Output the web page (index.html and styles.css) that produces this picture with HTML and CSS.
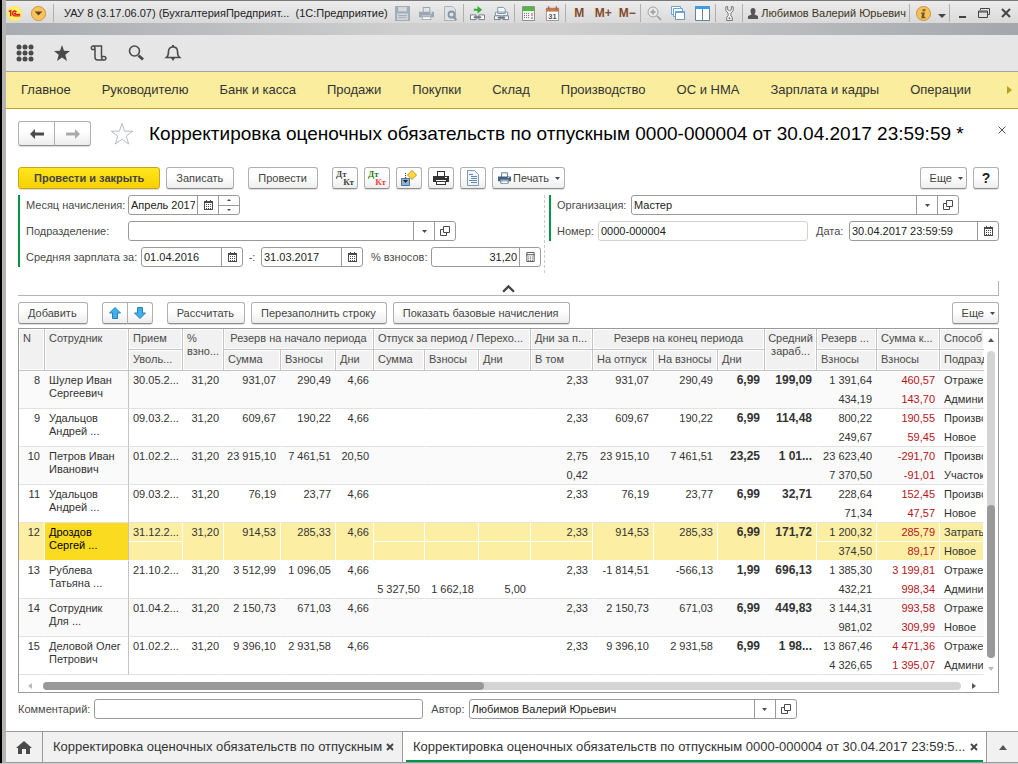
FILE: index.html
```html
<!DOCTYPE html>
<html lang="ru">
<head>
<meta charset="utf-8">
<title>Корректировка оценочных обязательств по отпускным</title>
<link rel="stylesheet" href="styles.css">
</head>
<body>
<svg class="defs" aria-hidden="true">
  <symbol id="i-cal" viewBox="0 0 9 10"><path d="M0 1h9v9H0z" fill="#4a4a4a"/><path d="M2 0h1v2H2zM6 0h1v2H6z" fill="#4a4a4a"/><path d="M1 3h7v6H1z" fill="#fff"/><path d="M2 4h1v1H2zM4 4h1v1H4zM6 4h1v1H6zM2 6h1v1H2zM4 6h1v1H4zM6 6h1v1H6zM2 8h1v1H2zM4 8h1v1H4zM6 8h1v1H6z" fill="#4a4a4a"/></symbol>
  <symbol id="i-caret" viewBox="0 0 5 3"><path d="M0 0h5L2.500 3z" fill="#4a4a4a"/></symbol>
  <symbol id="i-open" viewBox="0 0 10 10"><path d="M3.500.5h6v6h-6zM3 3.500H.5v6h6V7" fill="none" stroke="#4a4a4a"/></symbol>
  <symbol id="i-print" viewBox="0 0 16 14"><path d="M4 0h8v5h-1V1H5v4H4zM0 5h16v6h-3V9H3v2H0zM3 10h10v4H3z"/><path d="M4 11h8v2H4z" fill="#fff"/><path d="M12 6h2v1h-2z" fill="#fff"/></symbol>
  <symbol id="i-x" viewBox="0 0 8 8"><path d="M1 1l6 6M7 1L1 7" fill="none" stroke="#444" stroke-width="1.800"/></symbol>
</svg>
<div class="window">
  <header class="titlebar">
    <svg class="logo" viewBox="0 0 18 18"><circle cx="9" cy="9" r="8" fill="#ffe94a"/><circle cx="9" cy="9" r="7" fill="#fff26b"/><path d="M3 7l2-1v6M11 7.500c-1-2-4-1.500-4 1.300s2 2.700 3 2.700h5M10.500 9c-1.500-.8-2 .7-.5.900h5" fill="none" stroke="#e01b1b" stroke-width="1.500"/></svg>
    <button class="menu-ball" aria-label="Главное меню"><svg viewBox="0 0 18 18"><circle cx="9" cy="9" r="7.500" fill="#f8c35c" stroke="#c99537"/><path d="M5 7h8l-4 4z" fill="#5c4425"/></svg></button>
    <i class="sep"></i>
    <span class="app-title">УАУ 8 (3.17.06.07) (БухгалтерияПредприят...&nbsp; (1С:Предприятие)</span>
    <button class="tb" aria-label="Сохранить"><svg viewBox="0 0 14 14"><path d="M0 0h14v14H0z" fill="#a2adb8"/><path d="M3 1h8v4H3z" fill="#d5dade"/><path d="M2 7h10v6H2z" fill="#d5dade"/><path d="M3 9h8M3 11h8" stroke="#a2adb8"/></svg></button>
    <button class="tb" aria-label="Печать"><svg viewBox="0 0 16 14" fill="#9aa7b3"><use href="#i-print"/></svg></button>
    <button class="tb" aria-label="Предварительный просмотр"><svg viewBox="0 0 14 15"><path d="M1 .5h8l3 3v11H1z" fill="#dfe3e6" stroke="#a9b3bc"/><circle cx="8" cy="8.500" r="3" fill="none" stroke="#8795a3" stroke-width="1.800"/><path d="M10 11l3 3" stroke="#8795a3" stroke-width="2"/></svg></button>
    <i class="sep"></i>
    <button class="tb" aria-label="Получить ссылку"><svg viewBox="0 0 16 16"><path d="M4 3h4V0l5 4-5 4V5H4z" fill="#2fae2f"/><path d="M.5 9.500h6v5h-6zM9.500 9.500h6v5h-6z" fill="#fff" stroke="#6c7783"/><path d="M4 12h8" stroke="#6c7783" stroke-width="2"/></svg></button>
    <button class="tb" aria-label="Перейти по ссылке"><svg viewBox="0 0 16 16"><path d="M4 1.500h6l2 2V8H4zM1.500 6.500h13v4h-13z" fill="#f4f7fa" stroke="#7f93a8"/><path d="M.5 10.500h6v4h-6zM9.500 10.500h6v4h-6z" fill="#fff" stroke="#6c7783"/><path d="M4 12.500h8" stroke="#6c7783" stroke-width="2"/></svg></button>
    <i class="sep"></i>
    <button class="tb" aria-label="Калькулятор"><svg viewBox="0 0 13 15"><path d="M.5.5h12v14H.5z" fill="#f3f3f3" stroke="#8b9486"/><path d="M1 1h11v4H1z" fill="#4fb843"/><path d="M2 7.500h6M2 9.500h6M2 11.500h6" stroke="#6b7a70" stroke-dasharray="1 1"/><path d="M10 7v3" stroke="#d44"/><path d="M10 11v2" stroke="#666"/></svg></button>
    <button class="tb" aria-label="Календарь"><svg viewBox="0 0 14 16"><path d="M.5 2.500h13v13H.5z" fill="#fff" stroke="#9b938b"/><path d="M0 2h14v4H0z" fill="#c47a50"/><path d="M3 0v4M11 0v4" stroke="#8a5a40"/><text x="7" y="14" class="cal-day">31</text></svg></button>
    <i class="sep"></i>
    <button class="tb mem">M</button><button class="tb mem">M+</button><button class="tb mem">M−</button>
    <i class="sep"></i>
    <button class="tb" aria-label="Масштаб"><svg viewBox="0 0 15 15"><circle cx="6" cy="6" r="5" fill="#e9e9e9" stroke="#a5a5a5"/><path d="M3.500 6h5M6 3.500v5M10 10l4 4" stroke="#999" stroke-width="1.500"/></svg></button>
    <button class="tb" aria-label="Окна"><svg viewBox="0 0 15 15"><path d="M.5.5h9v8h-9z" fill="#fff" stroke="#6fa3d0"/><path d="M2.500 2.500h9v8h-9z" fill="#fff" stroke="#6fa3d0"/><path d="M4.500 5.500h9v8h-9z" fill="#fff" stroke="#6f93b5"/><path d="M4 5h10v2H4z" fill="#63a7de"/></svg></button>
    <button class="tb" aria-label="Разделить"><svg viewBox="0 0 15 15"><path d="M.5.5h14v14H.5zM7.500 3v12" fill="#fff" stroke="#64829c"/><path d="M0 0h15v3H0z" fill="#3f9be4"/></svg></button>
    <i class="sep"></i>
    <button class="tb" aria-label="Сервис"><svg viewBox="0 0 10 16"><path d="M1 1v4l2.500 2.500v3L2 12v3.500h6V12l-1.500-1.500v-3L9 5V1L7 .5V4L5 5 3 4V.5z" fill="#f1f1f1" stroke="#707070"/><circle cx="5" cy="13" r="1" fill="#707070"/></svg></button>
    <i class="sep"></i>
    <span class="user"><svg viewBox="0 0 10 11"><path d="M2.500 3a2.500 3 0 0 1 5 0c0 2-1 2.500-1 3.500L10 8v3H0V8l3.500-1.500c0-1-1-1.500-1-3.500z" fill="#555"/></svg>Любимов Валерий Юрьевич</span>
    <i class="sep"></i>
    <button class="tb" aria-label="О программе"><svg viewBox="0 0 16 16"><circle cx="8" cy="8" r="7.500" fill="#f7c159" stroke="#c6903a"/><path d="M7 3.500h3v2H7zM5.500 7H9.500l-1 4.500h1.500V13H5.500l1-4.500h-1z" fill="#6c5734"/></svg></button>
    <button class="tb more" aria-label="Ещё"><svg viewBox="0 0 8 6"><path d="M0 1h8L4 5z" fill="#444"/></svg></button>
    <i class="sep"></i>
    <button class="tb win" aria-label="Свернуть"><svg viewBox="0 0 12 10"><path d="M3 8h7v2H3z" fill="#444"/></svg></button>
    <button class="tb win" aria-label="Восстановить"><svg viewBox="0 0 12 10"><path d="M2.500 2V.5h9v6H9.500M.5 3h9v6.500h-9zM.5 4h9" fill="none" stroke="#444"/></svg></button>
    <button class="tb win" aria-label="Закрыть"><svg viewBox="0 0 12 10"><path d="M2 1l8 8M10 1L2 9" stroke="#444" stroke-width="2"/></svg></button>
  </header>
  <div class="band"></div>
  <div class="tools">
    <button aria-label="Меню функций"><svg viewBox="0 0 18 18" fill="#4a4a4a"><circle cx="3" cy="3" r="2.500"/><circle cx="9" cy="3" r="2.500"/><circle cx="15" cy="3" r="2.500"/><circle cx="3" cy="9" r="2.500"/><circle cx="9" cy="9" r="2.500"/><circle cx="15" cy="9" r="2.500"/><circle cx="3" cy="15" r="2.500"/><circle cx="9" cy="15" r="2.500"/><circle cx="15" cy="15" r="2.500"/></svg></button>
    <button aria-label="Избранное"><svg viewBox="0 0 18 18"><path d="M9 1l2 5.800 6 .2-4.700 3.700L14 17l-5-3.600L4 17l1.700-6.300L1 7l6-.2z" fill="#4a4a4a"/></svg></button>
    <button aria-label="История"><svg viewBox="0 0 18 18"><path d="M4.500 5.500H2c-1.500-1.500-.5-3.500 1-3.500h8.500v11M3 2c2 0 2 1.500 2 3v8c0 2 .5 3 2.500 3h7M11.500 12.500H14c2.500 0 2.500 3.500 0 3.500-1.500 0-2.500-1-2.500-3.500" fill="none" stroke="#4a4a4a" stroke-width="1.500"/></svg></button>
    <button aria-label="Поиск"><svg viewBox="0 0 18 18"><circle cx="7.500" cy="7" r="5" fill="none" stroke="#4a4a4a" stroke-width="1.600"/><path d="M11.500 11.500l4.500 4" stroke="#4a4a4a" stroke-width="3"/></svg></button>
    <button aria-label="Оповещения"><svg viewBox="0 0 18 18"><path d="M2.500 13.500c2-1.500 2-3 2-6 0-3 2-4.500 4.500-4.500s4.500 1.500 4.500 4.500c0 3 0 4.500 2 6z" fill="none" stroke="#4a4a4a" stroke-width="1.600"/><path d="M8 1h2v2H8zM7 14h4l-2 3z" fill="#4a4a4a"/></svg></button>
  </div>
  <nav class="sections">
    <a href="#">Главное</a><a href="#">Руководителю</a><a href="#">Банк и касса</a><a href="#">Продажи</a><a href="#">Покупки</a><a href="#">Склад</a><a href="#">Производство</a><a href="#">ОС и НМА</a><a href="#">Зарплата и кадры</a><a href="#">Операции</a>
    <button aria-label="Дальше"><svg viewBox="0 0 5 8"><path d="M0 0l5 4-5 4z" fill="#c09a1c"/></svg></button>
  </nav>

  <main class="doc">
    <div class="doc-head">
      <div class="pair history">
        <button class="btn" aria-label="Назад"><svg viewBox="0 0 14 10"><path d="M0 5l5-5v3.500h9v3H5V10z" fill="#4a4a4a"/></svg></button>
        <button class="btn" aria-label="Вперед"><svg viewBox="0 0 14 10"><path d="M14 5L9 0v3.500H0v3h9V10z" fill="#aaa"/></svg></button>
      </div>
      <button class="fav" aria-label="В избранное"><svg viewBox="0 0 24 24"><path d="M12 1.500l2.600 7.700h8.200l-6.600 4.800 2.500 8L12 17.200 5.300 22l2.500-8L1.200 9.200h8.200z" fill="#fff" stroke="#b4bac4"/></svg></button>
      <h1>Корректировка оценочных обязательств по отпускным 0000-000004 от 30.04.2017 23:59:59 *</h1>
      <button class="close" aria-label="Закрыть"><svg viewBox="0 0 8 8"><path d="M.5.5l7 7M7.500.5l-7 7" stroke="#555"/></svg></button>
    </div>

    <div class="commands">
      <button class="btn primary">Провести и закрыть</button>
      <button class="btn">Записать</button>
      <button class="btn gap">Провести</button>
      <button class="btn icon gap dtkt"><span>Дт</span><span>Кт</span></button>
      <button class="btn icon dtkt color"><span>Дт</span><span>Кт</span></button>
      <button class="btn icon" aria-label="Создать на основании"><svg viewBox="0 0 16 16"><path d="M11 .5l4.500 4.500-4.500 4.500L6.500 5z" fill="#ffd83b" stroke="#b8952a"/><path d="M.5 8.500h8v7h-8z" fill="#8fb4d3" stroke="#4f7596"/><path d="M4.500 3v6" stroke="#333" stroke-dasharray="1 1"/><path d="M2 10h5l-2.500 3z" fill="#222"/></svg></button>
      <button class="btn icon" aria-label="Печать документа"><svg viewBox="0 0 16 14" fill="#333"><use href="#i-print"/></svg></button>
      <button class="btn icon" aria-label="Отчет"><svg viewBox="0 0 14 16"><path d="M1.500.5h7l4 4v11h-11z" fill="#eef4f9" stroke="#7f9cb5"/><path d="M3 4.500h4M5 6.500h6M5 8.500h6M3 10.500h8M5 12.500h6" stroke="#6688a5"/></svg></button>
      <button class="btn print"><svg viewBox="0 0 16 14" fill="#41627f"><use href="#i-print"/></svg>Печать<svg class="caret"><use href="#i-caret"/></svg></button>
      <button class="btn right more-btn">Еще<svg class="caret"><use href="#i-caret"/></svg></button>
      <button class="btn icon help">?</button>
    </div>

    <form class="form">
      <div class="col left">
        <div class="group">
          <div class="line">
            <label class="w102" for="month">Месяц начисления:</label>
            <div class="field month"><input id="month" value="Апрель 2017"><button type="button" aria-label="Выбрать месяц"><svg class="cal"><use href="#i-cal"/></svg></button><div class="spin"><button type="button" aria-label="Больше"><svg viewBox="0 0 4 2"><path d="M0 2l2-2 2 2z" fill="#444"/></svg></button><button type="button" aria-label="Меньше"><svg viewBox="0 0 4 2"><path d="M0 0h4L2 2z" fill="#444"/></svg></button></div></div>
          </div>
          <div class="line">
            <label class="w102" for="dept">Подразделение:</label>
            <div class="field combo"><input id="dept"><button type="button" aria-label="Список"><svg class="caret"><use href="#i-caret"/></svg></button><button type="button" aria-label="Открыть"><svg class="open"><use href="#i-open"/></svg></button></div>
          </div>
          <div class="line">
            <label class="w115" for="from">Средняя зарплата за:</label>
            <div class="field date"><input id="from" value="01.04.2016"><button type="button" aria-label="Календарь"><svg class="cal"><use href="#i-cal"/></svg></button></div>
            <label class="dash" for="to">-:</label>
            <div class="field date"><input id="to" value="31.03.2017"><button type="button" aria-label="Календарь"><svg class="cal"><use href="#i-cal"/></svg></button></div>
            <label class="pct" for="pct">% взносов:</label>
            <div class="field num"><input id="pct" value="31,20"><button type="button" aria-label="Калькулятор"><svg class="cal" viewBox="0 0 9 11"><path d="M.5.5h8v10h-8zM0 3h9" fill="none" stroke="#4a4a4a"/><path d="M2 5.500h6M2 7.500h6M2 9.500h6" stroke="#4a4a4a" stroke-dasharray="1 1"/></svg></button></div>
          </div>
        </div>
      </div>
      <div class="col">
        <div class="group">
          <div class="line">
            <label class="org-label" for="org">Организация:</label>
            <div class="field combo"><input id="org" value="Мастер"><button type="button" aria-label="Список"><svg class="caret"><use href="#i-caret"/></svg></button><button type="button" aria-label="Открыть"><svg class="open"><use href="#i-open"/></svg></button></div>
          </div>
          <div class="line">
            <label class="num-label" for="no">Номер:</label>
            <div class="field soft"><input id="no" value="0000-000004"></div>
            <label class="date-label" for="date">Дата:</label>
            <div class="field datetime"><input id="date" value="30.04.2017 23:59:59"><button type="button" aria-label="Календарь"><svg class="cal"><use href="#i-cal"/></svg></button></div>
          </div>
        </div>
      </div>
    </form>

    <div class="splitter"><button aria-label="Свернуть группу"><svg viewBox="0 0 12 8"><path d="M1 7l5-5 5 5" fill="none" stroke="#444" stroke-width="2.200"/></svg></button></div>

    <div class="commands second">
      <button class="btn">Добавить</button>
      <div class="pair gap arrows">
        <button class="btn" aria-label="Вверх"><svg viewBox="0 0 12 12"><path d="M6 .5l5.500 5.500H8.500v5.500h-5V6H.5z" fill="#3fb0ee" stroke="#2a7fb5"/></svg></button>
        <button class="btn" aria-label="Вниз"><svg viewBox="0 0 12 12"><path d="M6 11.500L.5 6h3V.5h5V6h3z" fill="#3fb0ee" stroke="#2a7fb5"/></svg></button>
      </div>
      <button class="btn gap">Рассчитать</button>
      <button class="btn">Перезаполнить строку</button>
      <button class="btn">Показать базовые начисления</button>
      <button class="btn right more-btn">Еще<svg class="caret"><use href="#i-caret"/></svg></button>
    </div>

    <div class="grid">
      <div class="grid-main">
        <div class="grid-view">
          <table>
            <colgroup><col class="c26"><col class="c84"><col class="c54"><col class="c41"><col class="c57"><col class="c55"><col class="c38"><col class="c51"><col class="c54"><col class="c52"><col class="c62"><col class="c61"><col class="c64"><col class="c47"><col class="c52"><col class="c60"><col class="c63"><col></colgroup>
            <thead>
              <tr><th rowspan="2">N</th><th rowspan="2">Сотрудник</th><th>Прием</th><th rowspan="2">%<br>взно...</th><th colspan="3" class="c">Резерв на начало периода</th><th colspan="3">Отпуск за период / Перехо...</th><th>Дни за п...</th><th colspan="3" class="c">Резерв на конец периода</th><th rowspan="2" class="c">Средний<br>зараб...</th><th>Резерв ...</th><th>Сумма к...</th><th class="cut">Способ отражения</th></tr>
              <tr><th>Уволь...</th><th>Сумма</th><th>Взносы</th><th>Дни</th><th>Сумма</th><th>Взносы</th><th>Дни</th><th>В том</th><th>На отпуск</th><th>На взносы</th><th>Дни</th><th>Взносы</th><th>Взносы</th><th class="cut">Подразделение</th></tr>
            </thead>
            <tbody>
              <tr><td rowspan="2">8</td><td rowspan="2" class="name">Шулер Иван Сергеевич</td><td class="l">30.05.2...</td><td rowspan="2">31,20</td><td rowspan="2">931,07</td><td rowspan="2">290,49</td><td rowspan="2">4,66</td><td></td><td></td><td></td><td>2,33</td><td rowspan="2">931,07</td><td rowspan="2">290,49</td><td rowspan="2" class="b">6,99</td><td rowspan="2" class="b">199,09</td><td>1 391,64</td><td class="r">460,57</td><td class="l">Отражение</td></tr>
              <tr><td></td><td></td><td></td><td></td><td></td><td>434,19</td><td class="r">143,70</td><td class="l">Администрация</td></tr>
            </tbody>
            <tbody>
              <tr><td rowspan="2">9</td><td rowspan="2" class="name">Удальцов Андрей ...</td><td class="l">09.03.2...</td><td rowspan="2">31,20</td><td rowspan="2">609,67</td><td rowspan="2">190,22</td><td rowspan="2">4,66</td><td></td><td></td><td></td><td>2,33</td><td rowspan="2">609,67</td><td rowspan="2">190,22</td><td rowspan="2" class="b">6,99</td><td rowspan="2" class="b">114,48</td><td>800,22</td><td class="r">190,55</td><td class="l">Производство</td></tr>
              <tr><td></td><td></td><td></td><td></td><td></td><td>249,67</td><td class="r">59,45</td><td class="l">Новое</td></tr>
            </tbody>
            <tbody>
              <tr><td rowspan="2">10</td><td rowspan="2" class="name">Петров Иван Иванович</td><td class="l">01.02.2...</td><td rowspan="2">31,20</td><td rowspan="2">23 915,10</td><td rowspan="2">7 461,51</td><td rowspan="2">20,50</td><td></td><td></td><td></td><td>2,75</td><td rowspan="2">23 915,10</td><td rowspan="2">7 461,51</td><td rowspan="2" class="b">23,25</td><td rowspan="2" class="b">1 01...</td><td>23 623,40</td><td class="r">-291,70</td><td class="l">Производство</td></tr>
              <tr><td></td><td></td><td></td><td></td><td>0,42</td><td>7 370,50</td><td class="r">-91,01</td><td class="l">Участок</td></tr>
            </tbody>
            <tbody>
              <tr><td rowspan="2">11</td><td rowspan="2" class="name">Удальцов Андрей ...</td><td class="l">09.03.2...</td><td rowspan="2">31,20</td><td rowspan="2">76,19</td><td rowspan="2">23,77</td><td rowspan="2">4,66</td><td></td><td></td><td></td><td>2,33</td><td rowspan="2">76,19</td><td rowspan="2">23,77</td><td rowspan="2" class="b">6,99</td><td rowspan="2" class="b">32,71</td><td>228,64</td><td class="r">152,45</td><td class="l">Производство</td></tr>
              <tr><td></td><td></td><td></td><td></td><td></td><td>71,34</td><td class="r">47,57</td><td class="l">Новое</td></tr>
            </tbody>
            <tbody class="selected">
              <tr><td rowspan="2">12</td><td rowspan="2" class="name">Дроздов Сергей ...</td><td class="l">31.12.2...</td><td rowspan="2">31,20</td><td rowspan="2">914,53</td><td rowspan="2">285,33</td><td rowspan="2">4,66</td><td></td><td></td><td></td><td>2,33</td><td rowspan="2">914,53</td><td rowspan="2">285,33</td><td rowspan="2" class="b">6,99</td><td rowspan="2" class="b">171,72</td><td>1 200,32</td><td class="r">285,79</td><td class="l">Затраты</td></tr>
              <tr><td></td><td></td><td></td><td></td><td></td><td>374,50</td><td class="r">89,17</td><td class="l">Новое</td></tr>
            </tbody>
            <tbody>
              <tr><td rowspan="2">13</td><td rowspan="2" class="name">Рублева Татьяна ...</td><td class="l">21.10.2...</td><td rowspan="2">31,20</td><td rowspan="2">3 512,99</td><td rowspan="2">1 096,05</td><td rowspan="2">4,66</td><td></td><td></td><td></td><td>2,33</td><td rowspan="2">-1 814,51</td><td rowspan="2">-566,13</td><td rowspan="2" class="b">1,99</td><td rowspan="2" class="b">696,13</td><td>1 385,30</td><td class="r">3 199,81</td><td class="l">Отражение</td></tr>
              <tr><td></td><td>5 327,50</td><td>1 662,18</td><td>5,00</td><td></td><td>432,21</td><td class="r">998,34</td><td class="l">Администрация</td></tr>
            </tbody>
            <tbody>
              <tr><td rowspan="2">14</td><td rowspan="2" class="name">Сотрудник<br>Для ...</td><td class="l">01.04.2...</td><td rowspan="2">31,20</td><td rowspan="2">2 150,73</td><td rowspan="2">671,03</td><td rowspan="2">4,66</td><td></td><td></td><td></td><td>2,33</td><td rowspan="2">2 150,73</td><td rowspan="2">671,03</td><td rowspan="2" class="b">6,99</td><td rowspan="2" class="b">449,83</td><td>3 144,31</td><td class="r">993,58</td><td class="l">Отражение</td></tr>
              <tr><td></td><td></td><td></td><td></td><td></td><td>981,02</td><td class="r">309,99</td><td class="l">Новое</td></tr>
            </tbody>
            <tbody>
              <tr><td rowspan="2">15</td><td rowspan="2" class="name">Деловой Олег Петрович</td><td class="l">01.02.2...</td><td rowspan="2">31,20</td><td rowspan="2">9 396,10</td><td rowspan="2">2 931,58</td><td rowspan="2">4,66</td><td></td><td></td><td></td><td>2,33</td><td rowspan="2">9 396,10</td><td rowspan="2">2 931,58</td><td rowspan="2" class="b">6,99</td><td rowspan="2" class="b">1 98...</td><td>13 867,46</td><td class="r">4 471,36</td><td class="l">Отражение</td></tr>
              <tr><td></td><td></td><td></td><td></td><td></td><td>4 326,65</td><td class="r">1 395,07</td><td class="l">Администрация</td></tr>
            </tbody>
          </table>
        </div>
        <div class="vscroll">
          <svg viewBox="0 0 6 4"><path d="M0 4l3-4 3 4z" fill="#555"/></svg>
          <div class="track"><div class="thumb"></div></div>
          <svg viewBox="0 0 6 4"><path d="M0 0h6L3 4z" fill="#bbb"/></svg>
        </div>
      </div>
      <div class="hscroll">
        <svg viewBox="0 0 4 6"><path d="M4 0L0 3l4 3z" fill="#bbb"/></svg>
        <div class="track"><div class="thumb"></div></div>
        <svg viewBox="0 0 4 6"><path d="M0 0l4 3-4 3z" fill="#555"/></svg>
      </div>
    </div>

    <div class="footer">
      <label for="comment">Комментарий:</label>
      <div class="field comment"><input id="comment"></div>
      <label for="author">Автор:</label>
      <div class="field combo"><input id="author" value="Любимов Валерий Юрьевич"><button aria-label="Список"><svg class="caret"><use href="#i-caret"/></svg></button><button aria-label="Открыть"><svg class="open"><use href="#i-open"/></svg></button></div>
    </div>
  </main>

  <div class="tabs">
    <button class="home" aria-label="Начальная страница"><svg viewBox="0 0 16 13"><path d="M8 0l8 7h-2v6h-4V8H6v5H2V7H0z" fill="#4a4a4a"/></svg></button>
    <div class="tab"><a href="#">Корректировка оценочных обязательств по отпускным</a><button aria-label="Закрыть вкладку"><svg><use href="#i-x"/></svg></button></div>
    <div class="tab active"><a href="#">Корректировка оценочных обязательств по отпускным 0000-000004 от 30.04.2017 23:59:5...</a><button aria-label="Закрыть вкладку"><svg><use href="#i-x"/></svg></button></div>
    <button class="up" aria-label="Развернуть"><svg viewBox="0 0 8 5"><path d="M0 5l4-5 4 5z" fill="#555"/></svg></button>
  </div>
</div>
</body>
</html>
```

FILE: styles.css
```css
* { box-sizing: border-box; }
body { margin: 0; background: #fff; color: #333; font: 11px/13px "Liberation Sans", Arial, sans-serif; }
button, input { font: inherit; color: inherit; margin: 0; padding: 0; border: 0; background: none; }
button { display: inline-flex; align-items: center; justify-content: center; white-space: nowrap; }
a { color: inherit; text-decoration: none; }
svg { display: block; flex: none; }
label { color: #4a4a4a; white-space: nowrap; }
.defs { position: absolute; width: 0; height: 0; }

.window { min-height: 100vh; display: flex; flex-direction: column; border-left: 6px solid #b5b2b2; border-bottom: 1px solid #ccc; position: relative; }
.window::before { content: ""; position: absolute; left: -6px; top: 0; bottom: 0; width: 2px; background: #000; }

/* title bar */
.titlebar { display: flex; align-items: center; height: 23px; padding: 2px 1px 0 0; background: linear-gradient(#ececec, #d9d9d9); border-top: 1px solid #7b7777; }
.logo { width: 17px; height: 17px; }
.menu-ball { margin: 0 5px 0 7px; }
.menu-ball svg { width: 17px; height: 17px; }
.sep { flex: none; width: 1px; height: 18px; margin: 0 1px; background: #b0b0b0; }
.app-title { flex: 1; min-width: 0; margin-left: 9px; overflow: hidden; white-space: nowrap; font-size: 11px; line-height: 16px; color: #222; }
.tb { flex: none; width: 24px; height: 20px; }
.tb svg { width: 15px; height: 15px; }
.mem { font-size: 12px; font-weight: bold; color: #834a29; }
.cal-day { font: bold 8px "Liberation Sans", sans-serif; text-anchor: middle; fill: #555; }
.user { display: flex; flex: none; align-items: center; gap: 3px; padding: 0 2px 0 4px; color: #3c3420; white-space: nowrap; }
.user svg { width: 10px; height: 11px; }
.tb.more { width: 13px; }
.tb.more svg { width: 8px; height: 6px; margin-top: 6px; }
.tb.win { width: 22px; }
.tb.win svg { width: 12px; height: 10px; }
.band { height: 12px; background: linear-gradient(90deg, #a8abb0, #cfcfcf 40%, #cfcfcf 55%, #a3a7ac); }

/* global tools */
.tools { display: flex; align-items: center; gap: 19px; height: 36px; padding-left: 10px; background: #e6e6e6; }
.tools svg { width: 18px; height: 18px; }

/* section menu */
.sections { display: flex; align-items: center; gap: 31px; height: 38px; padding: 0 6px 0 15px; background: #faed9d; border-top: 1px solid #a5a5a5; border-bottom: 1px solid #c2a21c; font-size: 13px; line-height: 16px; color: #333; white-space: nowrap; }
.sections button { margin-left: auto; }
.sections button svg { width: 5px; height: 8px; }

.doc { flex: 1; padding: 12px 19px 0 12px; }
.doc-head { display: flex; align-items: center; height: 25px; margin-right: -8px; }
.btn { height: 22px; padding: 0 10px 0 9px; border: 1px solid #b0b0b0; border-bottom-color: #8f8f8f; border-radius: 3px; background: linear-gradient(#fff 40%, #ededed); color: #444; box-shadow: 0 1px #ddd; }
.pair { display: flex; }
.pair .btn { width: 26px; padding: 0; }
.pair .btn:first-child { border-radius: 3px 0 0 3px; }
.pair .btn:last-child { margin-left: -1px; border-radius: 0 3px 3px 0; }
.pair.history .btn { width: 37px; height: 25px; }
.history .btn svg { width: 14px; height: 10px; }
.arrows svg { width: 12px; height: 12px; }
.fav { margin: 0 15px 0 19px; }
.fav svg { width: 24px; height: 24px; }
h1 { flex: 1; min-width: 0; margin: 0; font-size: 19px; font-weight: normal; line-height: 26px; color: #000; white-space: nowrap; }
.close { align-self: flex-start; width: 10px; height: 18px; }
.close svg { width: 8px; height: 8px; }

.commands { display: flex; gap: 6px; margin-top: 21px; }
.commands .gap { margin-left: 8px; }
.commands .right { margin-left: auto; }
.btn.primary { padding: 0 15px; background: linear-gradient(#ffe61f, #f7d000); border-color: #c7a51a; font-weight: bold; }
.btn.icon { width: 26px; padding: 0; }
.icon svg, .print svg { width: 16px; height: 16px; }
.btn.print { padding: 0 4px 0 5px; }
.print svg:first-child { margin-right: 2px; width: 13px; }
.btn .caret { width: 5px; height: 3px; margin-left: 6px; }
.btn.more-btn { padding: 0 3px 0 9px; }
.help { font-size: 14px; font-weight: bold; color: #222; }
.btn.dtkt { flex-direction: column; align-items: stretch; padding: 0 3px; font: bold 9px/8px "Liberation Serif", serif; }
.dtkt span:first-child { text-align: left; }
.dtkt span:last-child { text-align: right; }
.color span:first-child { color: #2b7a12; }
.color span:last-child { color: #f24141; }

/* document fields */
.form { display: grid; grid-template-columns: 527fr 450fr; gap: 4px; margin-top: 6px; }
.left { border-right: 1px dashed #ccc; padding-bottom: 6px; }
.group { display: flex; flex-direction: column; gap: 6px; padding-left: 6px; border-left: 2px solid #009646; }
.line { display: flex; align-items: center; height: 20px; }
.w102 { width: 102px; }
.w115 { width: 115px; }
.dash { width: 18px; text-align: center; }
.pct { width: 68px; padding-left: 8px; }
.org-label { width: 74px; }
.num-label { width: 41px; }
.date-label { width: 41px; padding-left: 8px; }
.field { display: flex; height: 20px; border: 1px solid #9a9a9a; border-radius: 3px; background: #fff; color: #222; overflow: hidden; }
.field input { flex: 1; width: 0; min-width: 0; padding: 0 2px; outline: 0; }
.field button { width: 21px; border-left: 1px solid #9a9a9a; }
.month { width: 112px; }
.combo { width: 328px; }
.date { width: 102px; }
.num { width: 110px; }
.num input { text-align: right; }
.soft { flex: 1; border-color: #d2d2d2; }
.datetime { width: 150px; }
.spin { display: flex; flex-direction: column; }
.spin button { flex: 1; }
.spin button + button { border-top: 1px solid #9a9a9a; }
.spin svg { width: 4px; height: 2px; }
.cal { width: 9px; height: 10px; }
.caret { width: 5px; height: 3px; }
.open { width: 10px; height: 10px; }

.splitter { display: flex; justify-content: center; align-items: flex-start; height: 15px; margin-top: 8px; border: solid #b4b4b4; border-width: 0 1px 1px 0; }
.splitter button { height: 14px; }
.splitter svg { width: 13px; height: 9px; }
.commands.second { margin-top: 6px; }

/* employee table */
.grid { margin-top: 4px; border: 1px solid #9a9a9a; }
.grid-main { display: flex; }
.grid-view { flex: 1; min-width: 0; overflow: hidden; }
table { width: 100%; table-layout: fixed; border-collapse: separate; border-spacing: 0; }
.c26 { width: 26px; } .c38 { width: 38px; } .c41 { width: 41px; } .c47 { width: 47px; } .c51 { width: 51px; }
.c52 { width: 52px; } .c54 { width: 54px; } .c55 { width: 55px; } .c57 { width: 57px; } .c60 { width: 60px; }
.c61 { width: 61px; } .c62 { width: 62px; } .c63 { width: 63px; } .c64 { width: 64px; } .c84 { width: 84px; }
th, td { overflow: hidden; white-space: nowrap; vertical-align: top; }
th { height: 21px; padding: 3px 0 3px 4px; border: solid #c4c4c4; border-width: 0 1px 1px 0; background: #f1f1f1; box-shadow: inset 0 0 0 1px #fff; font-weight: normal; text-align: left; color: #4a4a4a; }
th.c { text-align: center; padding-left: 0; }
th.cut { border-right: 0; }
td { height: 19px; padding: 3px 4px 2px 0; text-align: right; border-right: 1px solid transparent; }
td[rowspan], tr + tr td { border-bottom: 1px solid #e2e2e2; }
tbody:nth-of-type(odd) td { background: #fafafa; }
td.name { padding: 3px 0 2px 4px; text-align: left; white-space: normal; border-right-color: #c4c4c4; }
td.l { padding-right: 0; padding-left: 4px; text-align: left; }
td.b { font-size: 12px; font-weight: bold; }
td.r { color: #b3161c; }
tbody.selected td { background: #fcefa4; border-right-color: #fff; border-bottom: 1px solid #fff; }
tbody.selected td.name { background: #fbdb1f; border-right-color: #c4c4c4; color: #000; }
.vscroll { display: flex; flex-direction: column; align-items: center; width: 14px; padding: 9px 0 4px; gap: 9px; }
.vscroll svg { width: 6px; height: 4px; }
.vscroll .track { display: flex; flex: 1; align-items: flex-end; width: 8px; border-radius: 4px; background: #d4d4d4; }
.vscroll .thumb { width: 8px; height: 50%; border-radius: 4px; background: #999; }
.hscroll { display: flex; align-items: center; gap: 11px; height: 17px; padding: 4px 22px 0 9px; }
.hscroll svg { width: 4px; height: 6px; }
.hscroll .track { flex: 1; height: 8px; border-radius: 4px; background: #d4d4d4; }
.hscroll .thumb { width: 48%; height: 8px; border-radius: 4px; background: #999; }

.footer { display: flex; align-items: center; gap: 4px; margin-top: 6px; padding-bottom: 8px; }
.footer label + .comment { width: 329px; margin-right: 4px; }

/* open windows */
.tabs { display: flex; height: 32px; border: solid #9a9a9a; border-width: 1px 0; background: #f1f1f1; font-size: 13px; line-height: 16px; }
.home { width: 37px; border-right: 1px solid #9a9a9a; }
.home svg { width: 16px; height: 13px; }
.tab { display: flex; flex: none; align-items: center; gap: 4px; width: 360px; padding: 0 8px 0 10px; border-right: 1px solid #9a9a9a; }
.tab a { flex: 1; min-width: 0; overflow: hidden; white-space: nowrap; }
.tab svg { width: 8px; height: 8px; }
.tab.active { position: relative; flex: 1; min-width: 0; background: #fff; }
.active::after { content: ""; position: absolute; left: 3px; right: 3px; bottom: 0; height: 2px; background: #009646; }
.up { width: 31px; }
.up svg { width: 8px; height: 5px; }
```
